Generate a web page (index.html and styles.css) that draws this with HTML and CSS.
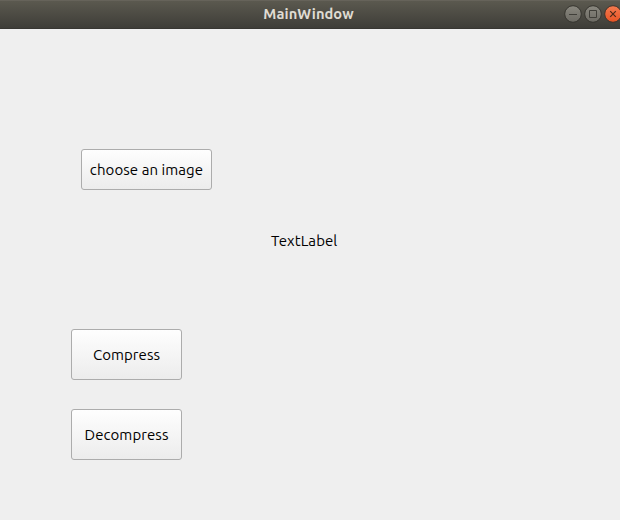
FILE: index.html
```html
<!DOCTYPE html>
<html lang="en">
<head>
<meta charset="utf-8">
<title>MainWindow</title>
<link rel="stylesheet" href="styles.css">
</head>
<body>
<div class="window">
  <header class="titlebar">
    <span class="side"></span>
    <span class="title">MainWindow</span>
    <div class="side controls">
      <svg class="control" viewBox="0 0 18 18" aria-label="Minimize">
        <defs>
          <linearGradient id="grey" x2="0" y2="1"><stop offset="0" stop-color="#8a887f"/><stop offset="1" stop-color="#6c6a63"/></linearGradient>
          <linearGradient id="orange" x2="0" y2="1"><stop offset="0" stop-color="#f47b50"/><stop offset="1" stop-color="#e65324"/></linearGradient>
        </defs>
        <circle class="disc" cx="9" cy="9" r="8.3"/>
        <path class="mark" d="M5 9.5h8"/>
      </svg>
      <svg class="control" viewBox="0 0 18 18" aria-label="Maximize">
        <circle class="disc" cx="9" cy="9" r="8.3"/>
        <path class="mark" d="M5.5 5.5h7v7h-7z"/>
      </svg>
      <svg class="control" viewBox="0 0 18 18" aria-label="Close">
        <circle class="disc close" cx="9" cy="9" r="8.3"/>
        <path class="mark cross" d="M6.2 6.2l5.6 5.6M11.8 6.2l-5.6 5.6"/>
      </svg>
    </div>
  </header>
  <main class="content">
    <button class="button choose"><span>choose an image</span></button>
    <div class="label">TextLabel</div>
    <div class="actions">
      <button class="button compress"><span>Compress</span></button>
      <button class="button decompress"><span>Decompress</span></button>
    </div>
  </main>
</div>
</body>
</html>
```
FILE: styles.css
```css
* { box-sizing: border-box; }

body {
  margin: 0;
  font-family: Ubuntu, "Noto Sans", sans-serif;
  font-size: 15px;
  letter-spacing: 0.07px;
  color: #000;
}

.window {
  display: flex;
  flex-direction: column;
  width: 620px;
  height: 520px;
  overflow: hidden;
  background: #efefef;
}

.titlebar {
  display: flex;
  flex: none;
  align-items: center;
  height: 29px;
  padding-bottom: 1px;
  background: linear-gradient(#5b594f, #3e3d38);
  border-top: 1px solid #66635a;
  border-bottom: 1px solid #373632;
}

.side { flex: 1; }

.title {
  color: #dfdbd2;
  font-size: 14.67px;
  font-weight: 700;
  line-height: 20px;
  margin-right: 5px;
}

.controls {
  display: flex;
  justify-content: flex-end;
  gap: 2px;
  margin-right: -2px;
}

.control { width: 18px; height: 18px; }

.disc { fill: url(#grey); stroke: #36352f; }
.close { fill: url(#orange); stroke: #41332b; }
.mark { fill: none; stroke: #403f39; }
.cross { stroke: #4b2a19; stroke-width: 1.2; }

.content {
  display: flex;
  flex-direction: column;
  align-items: flex-start;
  padding: 120px 0 0 71px;
}

.button {
  display: flex;
  align-items: center;
  justify-content: center;
  padding: 0;
  border: 1px solid #acacac;
  border-radius: 3px;
  background: linear-gradient(#fefefe, #ececec);
  font: inherit;
  letter-spacing: inherit;
  color: inherit;
  white-space: nowrap;
}

.choose { width: 131px; height: 41px; margin-left: 10px; }

.label {
  margin: 41px 0 0 200px;
  line-height: 20px;
}

.actions {
  display: grid;
  gap: 29px;
  margin-top: 78px;
}

.compress, .decompress { width: 111px; height: 51px; }
```
